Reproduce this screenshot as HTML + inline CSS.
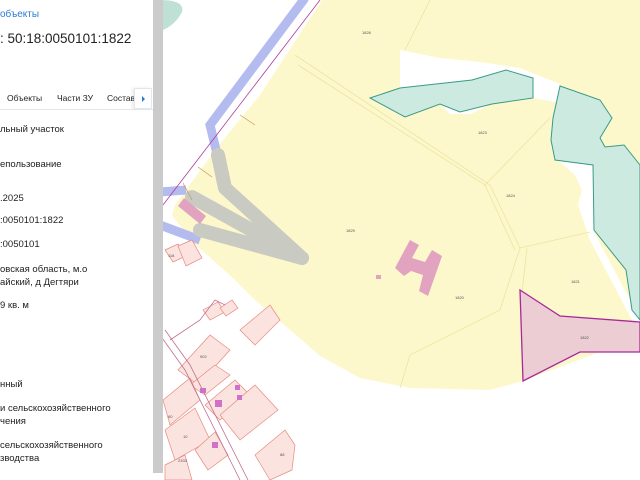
<!DOCTYPE html>
<html><head><meta charset="utf-8"><style>
*{margin:0;padding:0;box-sizing:border-box}
body{width:640px;height:480px;overflow:hidden;background:#fff;font-family:"Liberation Sans",sans-serif;position:relative}
#map{position:absolute;left:0;top:0}
#panel{position:absolute;left:0;top:0;width:153px;height:480px;background:#fff;overflow:hidden;color:#222}
#sb{position:absolute;left:153px;top:0;width:10px;height:473px;background:#cbcbcb}
.t{position:absolute;white-space:nowrap;font-size:9.5px}
</style></head><body>
<svg id="map" width="640" height="480" viewBox="0 0 640 480">
<rect width="640" height="480" fill="#fff"/>
<polygon fill="#fdf8cc" points="322,0 640,0 640,330 600,352 523,381 490,390 410,388 360,378 320,356 290,330 255,300 235,280 215,262 190,240 172,215 175,205 215,150 260,95"/>
<!-- white gaps -->
<polygon fill="#fff" points="400,50 440,58 480,62 520,68 560,84 556,102 533,98 533,78 506,70 472,80 400,88"/>
<polygon fill="#fff" points="440,104 460,112 492,104 470,114 450,114"/>
<polygon fill="#fff" points="555,158 593,165 594,232 630,300 640,322 633,322 590,240 578,205 582,190 575,175"/>
<!-- teal -->
<polygon fill="#cdeae1" stroke="#3a9a86" stroke-width="1" points="370,98 400,88 472,80 506,70 533,78 533,98 492,104 460,112 440,104 405,117"/>
<polygon fill="#cdeae1" stroke="#3a9a86" stroke-width="1" points="560,86 600,100 612,118 600,138 605,147 624,145 640,165 640,320 632,310 626,270 594,230 593,165 555,160 551,140 553,118"/>
<path d="M160,0 Q185,0 182,12 Q175,25 163,30 Z" fill="#bfe0d4"/>
<g fill="none" stroke="#ece4a0" stroke-width="0.8">
<path d="M295,55 L490,185 L520,248 L500,310 L410,355 L400,388"/>
<path d="M298,65 L485,185 L515,250"/>
<path d="M430,0 L405,50"/>
<path d="M485,185 L550,118"/>
<path d="M520,248 L590,232"/>
<path d="M527,248 L522,292"/>
</g>
<polygon fill="#ebcdd3" stroke="#a8289a" stroke-width="1.3" points="520,290 560,316 640,322 640,352 580,352 523,381"/>
<g stroke="#b4bbef" stroke-width="9" fill="none">
<path d="M305,-2 L210,125 L218,158"/>
<path d="M160,192 L186,190"/>
<path d="M160,225 L200,240"/>
</g>
<g stroke="#c9cbc3" stroke-width="14" fill="none" stroke-linecap="round" stroke-linejoin="round">
<path d="M218,155 L225,188 L302,258"/>
<path d="M192,197 L302,258 L200,230"/>
</g>
<path d="M320,0 L163,205" stroke="#b03c9a" stroke-width="0.8" fill="none"/>
<g stroke="#c99060" stroke-width="0.7"><path d="M240,115 L255,125"/><path d="M198,167 L212,177"/><path d="M183,183 L192,200"/></g>
<polygon fill="#e1a3c0" points="178,206 184,198 206,216 200,224"/>
<g fill="#e1a3c0"><polygon points="395,268 410,240 419,245 412,258 425,262 432,250 442,256 428,296 419,291 423,275 411,271 404,276"/>
<rect x="376" y="275" width="5" height="4"/></g>
<g fill="#fbe3df" stroke="#e88a80" stroke-width="0.7">
<polygon points="165,250 178,244 186,256 173,262"/><polygon points="178,246 192,240 202,258 186,266"/>
<polygon points="203,310 218,302 225,312 210,320"/><polygon points="220,308 232,300 238,308 226,316"/>
<polygon points="178,370 210,335 230,350 198,385"/>
<polygon points="190,385 215,365 230,375 205,395"/>
<polygon points="205,405 235,380 250,395 220,420"/>
<polygon points="220,415 255,385 278,410 240,440"/>
<polygon points="163,400 190,378 200,400 170,425"/>
<polygon points="165,430 195,408 210,440 175,460"/>
<polygon points="195,450 215,432 228,455 208,470"/>
<polygon points="255,455 285,430 295,445 292,470 270,480"/>
<polygon points="165,465 185,455 192,480 165,480"/>
<polygon points="240,330 270,305 280,320 255,345"/>
</g>
<g stroke="#c07090" stroke-width="0.8" fill="none">
<path d="M160,335 L185,370 L240,480"/><path d="M165,330 L190,365 L248,480"/>
<path d="M170,340 L200,320 L215,300 L225,305"/>
</g>
<g fill="#d070c8"><rect x="200" y="388" width="6" height="5"/><rect x="215" y="400" width="7" height="7"/><rect x="235" y="385" width="5" height="5"/><rect x="237" y="395" width="5" height="5"/><rect x="212" y="442" width="6" height="6"/></g>
<g font-size="4" fill="#555" font-family="Liberation Sans">
<text x="362" y="34">1826</text><text x="346" y="232">1829</text><text x="478" y="134">1823</text>
<text x="506" y="197">1824</text><text x="455" y="299">1820</text><text x="571" y="283">1821</text>
<text x="580" y="339">1822</text><text x="200" y="358">902</text><text x="178" y="462">2333</text>
<text x="183" y="438">10</text><text x="168" y="418">60</text><text x="280" y="456">88</text><text x="168" y="257">118</text>
</g>
</svg>
<div id="sb"></div>
<div id="panel">
<div class="t" style="left:0;top:9px;color:#2a7bd6;font-size:10px">объекты</div>
<div class="t" style="left:0;top:31px;font-size:13.5px;color:#222">: 50:18:0050101:1822</div>
<div class="t" style="left:7px;top:93px;font-size:8.5px">Объекты</div>
<div class="t" style="left:57px;top:93px;font-size:8.5px">Части ЗУ</div>
<div class="t" style="left:107px;top:93px;font-size:8.5px">Состав</div>
<div style="position:absolute;left:134px;top:88px;width:18px;height:21px;background:#fff;border:1px solid #e2e6ee;box-shadow:-2px 0 3px rgba(0,0,0,.08)"><div style="position:absolute;left:7px;top:7px;border-left:3px solid #2a7bd6;border-top:3px solid transparent;border-bottom:3px solid transparent"></div></div>
<div style="position:absolute;left:0;top:109px;width:153px;height:1px;background:#e6e6e6"></div>
<div class="t" style="top:124px;left:0">льный участок</div>
<div class="t" style="top:159px;left:0">епользование</div>
<div class="t" style="top:193px;left:0">.2025</div>
<div class="t" style="top:215px;left:0">:0050101:1822</div>
<div class="t" style="top:239px;left:0">:0050101</div>
<div class="t" style="top:264px;left:0">овская область, м.о</div>
<div class="t" style="top:277px;left:0">айский, д Дегтяри</div>
<div class="t" style="top:300px;left:0">9 кв. м</div>
<div class="t" style="top:379px;left:0">нный</div>
<div class="t" style="top:403px;left:0">и сельскохозяйственного</div>
<div class="t" style="top:416px;left:0">чения</div>
<div class="t" style="top:440px;left:0">сельскохозяйственного</div>
<div class="t" style="top:453px;left:0">зводства</div>
</div>
</body></html>
